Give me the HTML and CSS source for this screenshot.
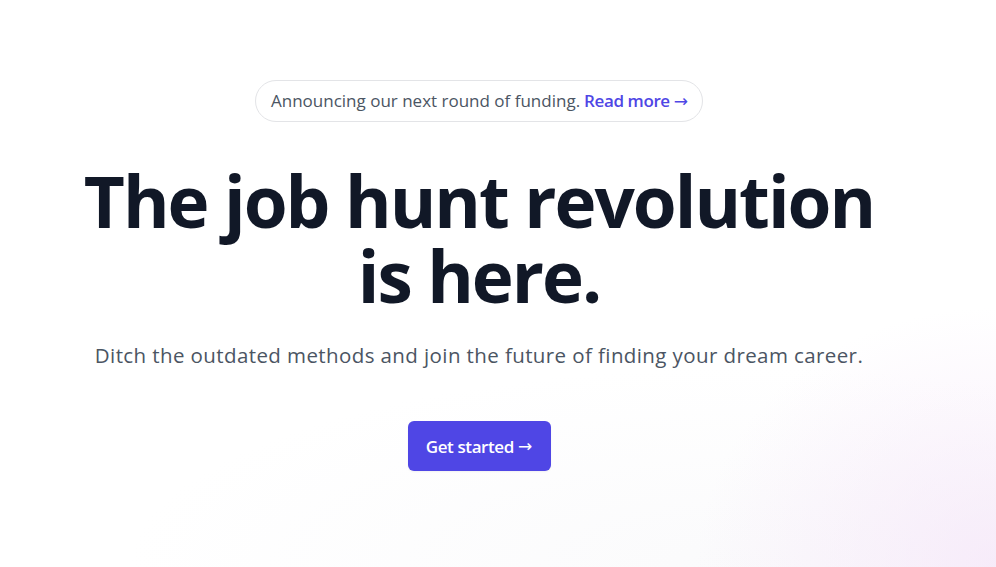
FILE: index.html
```html
<!DOCTYPE html>
<html lang="en">
<head>
<meta charset="utf-8">
<title>The job hunt revolution is here.</title>
<link rel="stylesheet" href="styles.css">
</head>
<body>
<main class="hero">
  <div class="announce">
    <span class="announce-text">Announcing our next round of funding.</span>
    <a class="announce-link" href="#">Read more <span class="arrow" aria-hidden="true">→</span></a>
  </div>
  <h1 class="title">The job hunt revolution<br>is here.</h1>
  <p class="lead">Ditch the outdated methods and join the future of finding your dream career.</p>
  <a class="cta" href="#">Get started <span class="arrow" aria-hidden="true">→</span></a>
</main>
</body>
</html>
```
FILE: styles.css
```css
html, body {
  margin: 0;
  height: 100%;
}
body {
  background-color: #ffffff;
  background-image:
    radial-gradient(ellipse 300px 260px at 100% 100%, rgba(244, 228, 248, 0.7), rgba(244, 228, 248, 0) 100%),
    radial-gradient(ellipse 620px 200px at 75% 100%, rgba(240, 240, 244, 0.3), rgba(255, 255, 255, 0) 100%);
  background-repeat: no-repeat;
  overflow: hidden;
  font-family: "Open Sans", "Noto Sans", sans-serif;
}
.hero {
  display: flex;
  flex-direction: column;
  align-items: center;
  padding: 80px 38px 0 0;
  text-align: center;
}
.announce {
  display: flex;
  align-items: center;
  height: 40px;
  padding: 0 14px 0 15px;
  border: 1px solid #e3e4e7;
  border-radius: 999px;
  font-size: 17px;
  line-height: 40px;
  color: #4b5563;
  white-space: nowrap;
}
.announce-link {
  margin-left: 4px;
  color: #4f46e5;
  font-weight: 600;
  text-decoration: none;
  letter-spacing: -0.4px;
}
.arrow {
  font-family: "DejaVu Sans", sans-serif;
  font-weight: 400;
  letter-spacing: 0;
}
.title {
  margin: 41px 0 0;
  font-family: "Open Sans", "Noto Sans", sans-serif;
  font-weight: 700;
  font-size: 71px;
  line-height: 75px;
  color: #111827;
  letter-spacing: -2px;
}
.lead {
  margin: 26px 0 0;
  font-size: 20.5px;
  line-height: 32px;
  letter-spacing: 0.4px;
  color: #4b5563;
}
.cta {
  margin-top: 50px;
  display: flex;
  align-items: center;
  justify-content: center;
  width: 143px;
  height: 50px;
  box-sizing: border-box;
  border-radius: 6px;
  background: #4f46e5;
  color: #ffffff;
  font-size: 17px;
  font-weight: 600;
  letter-spacing: -0.4px;
  text-decoration: none;
  box-shadow: 0 1px 2px rgba(0, 0, 0, 0.05);
}
.cta .arrow {
  margin-left: 4px;
}
```
